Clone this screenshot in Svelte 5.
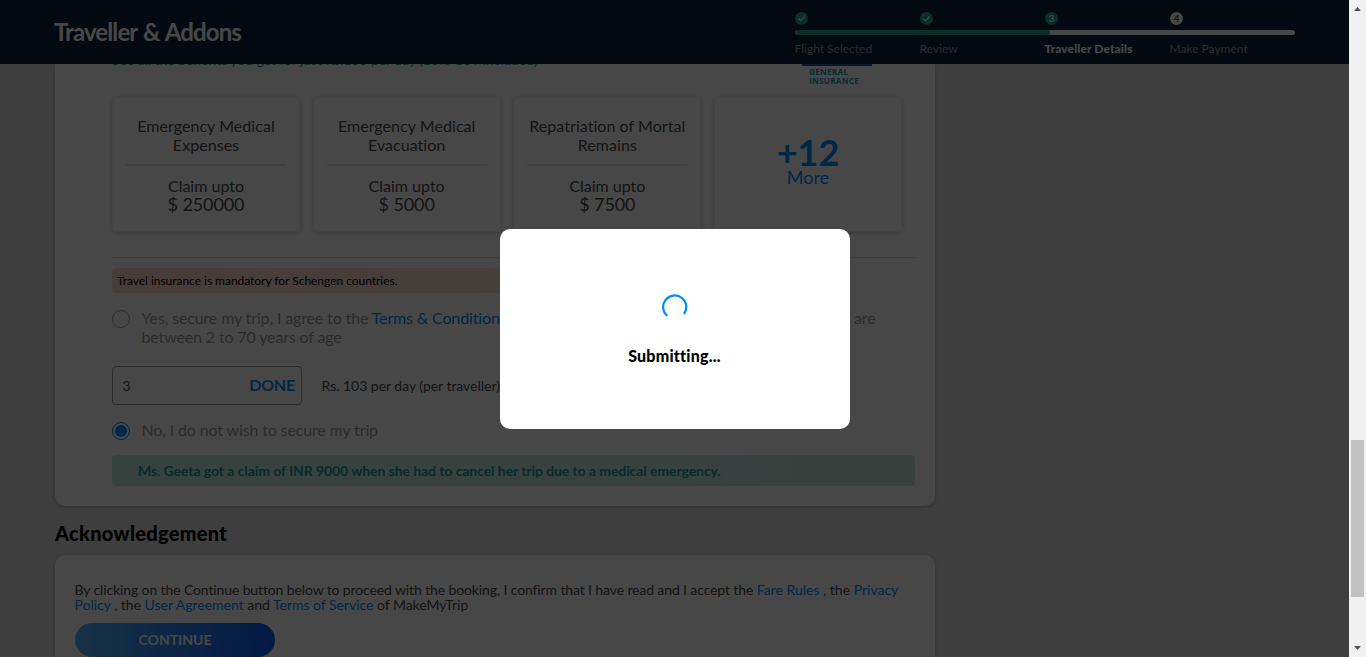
<script>
  const steps = [
    { label: 'Flight Selected', state: 'done' },
    { label: 'Review', state: 'done' },
    { label: 'Traveller Details', state: 'current' },
    { label: 'Make Payment', state: 'next' }
  ];
  const benefits = [
    { lines: ['Emergency Medical', 'Expenses'], amount: '$ 250000' },
    { lines: ['Emergency Medical', 'Evacuation'], amount: '$ 5000' },
    { lines: ['Repatriation of Mortal', 'Remains'], amount: '$ 7500' }
  ];
</script>

<div class="window">
  <div class="page">
    <header>
      <h1>Traveller &amp; Addons</h1>
      <div class="stepper">
        <div class="row">
          {#each steps as step, i}
            <span class="dot {step.state}">
              {#if step.state === 'done'}
                <svg width="13" height="13" viewBox="0 0 13 13"><path d="M3.3 6.7l2.2 2.2 4.2-4.6" fill="none" stroke="#fff" stroke-width="1.2" /></svg>
              {:else}{i + 1}{/if}
            </span>
          {/each}
        </div>
        <div class="track"><div class="fill"></div></div>
        <div class="row labels">
          {#each steps as step}
            <span class={step.state}>{step.label}</span>
          {/each}
        </div>
      </div>
    </header>

    <main>
      <section class="card insurance">
        <div class="intro">
          <p>See all the benefits you get for just Rs.103 per day (18% GST included)</p>
          <div class="logo">GENERAL<br />INSURANCE</div>
        </div>
        <div class="benefits">
          {#each benefits as b}
            <div class="benefit">
              <div class="name">{b.lines[0]}<br />{b.lines[1]}</div>
              <div class="rule"></div>
              <div class="claim">Claim upto</div>
              <div class="amount">{b.amount}</div>
            </div>
          {/each}
          <div class="benefit more">
            <strong>+12</strong>
            <span>More</span>
          </div>
        </div>
        <div class="divider"></div>
        <div class="notice">Travel insurance is mandatory for Schengen countries.</div>
        <div class="option yes">
          <span class="radio"></span>
          <div>
            <div class="first"><span>Yes, secure my trip, I agree to the <a>Terms &amp; Conditions</a> &amp; confirm all passengers</span><span>are</span></div>
            <div>between 2 to 70 years of age</div>
          </div>
        </div>
        <div class="days">
          <div class="field"><span>3</span><b>DONE</b></div>
          <span class="rate">Rs. 103 per day (per traveller)</span>
        </div>
        <div class="option no">
          <span class="radio on"></span>
          <div>No, I do not wish to secure my trip</div>
        </div>
        <div class="story">Ms. Geeta got a claim of INR 9000 when she had to cancel her trip due to a medical emergency.</div>
      </section>

      <h2>Acknowledgement</h2>
      <section class="card ack">
        <p><span class="tight">By clicking on the Continue button below to proceed with the booking, I confirm that I have read and I accept the</span>{' '}<span class="links"><a>Fare Rules</a> , the <a>Privacy</a></span><br /><a>Policy</a> , the <a>User Agreement</a> and <a>Terms of Service</a> of MakeMyTrip</p>
        <button>CONTINUE</button>
      </section>
    </main>

    <div class="overlay">
      <div class="dialog">
        <svg width="26" height="26" viewBox="0 0 26 26"><path d="M5.3 22A11.6 11.6 0 1 1 22 20" fill="none" stroke="#008cff" stroke-width="2.2" /></svg>
        <div>Submitting...</div>
      </div>
    </div>
  </div>

  <div class="scrollbar">
    <svg width="17" height="17" viewBox="0 0 17 17"><path d="M5 11h7L8.500 7z" fill="#505050" /></svg>
    <div class="thumb"></div>
    <svg width="17" height="17" viewBox="0 0 17 17"><path d="M5 6h7L8.500 10z" fill="#505050" /></svg>
  </div>
</div>

<style>
  :global(body) { margin: 0; overflow: hidden; }
  .window { display: flex; width: 1366px; height: 657px; overflow: hidden; font-family: Lato, sans-serif; font-variant-ligatures: none; color: #4a4a4a; }
  .window * { box-sizing: border-box; }
  h1, h2, p { margin: 0; }
  a { color: #008cff; }
  .page { position: relative; width: 1349px; height: 657px; display: flex; flex-direction: column; background: #dfdfdf; overflow: hidden; }

  header { flex: none; height: 64px; padding: 0 54px; display: flex; justify-content: space-between; background: #0a223d; }
  h1 { color: #fff; font-size: 24px; line-height: 63px; font-weight: 700; letter-spacing: -0.9px; word-spacing: 1.2px; }
  .stepper { width: 500px; padding-top: 12px; }
  .row { display: grid; grid-template-columns: repeat(4, 125px); }
  .dot { width: 13px; height: 13px; border-radius: 50%; background: #22a890; color: #fff; font-size: 10px; line-height: 13px; font-weight: 700; text-align: center; }
  .dot svg { display: block; }
  .dot.next { background: #fff; color: #4a4a4a; }
  .track { margin-top: 5px; height: 5px; border-radius: 3px; background: #fff; overflow: hidden; }
  .fill { width: 255px; height: 5px; border-radius: 0 3px 3px 0; background: #22a890; }
  .labels { margin: 6px 0 0 -0.5px; font-size: 12px; line-height: 15px; color: #9b9b9b; white-space: nowrap; }
  .labels .current { color: #fff; font-weight: 900; letter-spacing: 0.1px; }

  main { flex: 1; min-height: 0; padding-left: 55px; overflow: hidden; }
  .card { width: 880px; background: #fff; box-shadow: 0 1px 4px rgba(0, 0, 0, 0.25); }
  .insurance { height: 442px; padding: 0 20px 0 57px; border-radius: 0 0 10px 10px; }
  .intro { height: 33px; display: flex; justify-content: space-between; align-items: flex-start; }
  .intro p { margin-top: -13px; font-size: 14px; line-height: 18px; letter-spacing: -0.07px; color: #1a9b93; white-space: nowrap; }
  .logo { width: 70px; height: 22px; margin-right: 43px; padding: 1px 0 0 7px; border-top: 2px solid #2a4fb0; color: #0f9dbb; font: 700 8.3px/9px "Open Sans", sans-serif; letter-spacing: 0.2px; }
  .benefits { display: grid; grid-template-columns: repeat(4, 188px); column-gap: 12.66px; }
  .benefit { height: 135px; padding: 18px 13px 0; border: 1px solid #eaf0f8; border-radius: 4px; box-shadow: 0 1px 5px rgba(0, 0, 0, 0.2); text-align: center; font-size: 16px; line-height: 19px; white-space: nowrap; }
  .name { margin: 0 -10px; letter-spacing: 0.05px; }
  .rule { height: 2px; margin: 10px 0 10px; background: #dde7f4; }
  .amount { font-size: 18px; line-height: 18px; letter-spacing: -0.1px; }
  .more { display: flex; flex-direction: column; padding-top: 36px; color: #008cff; }
  .more strong { font-size: 36px; line-height: 36px; font-weight: 700; }
  .more span { font-size: 18px; line-height: 14px; }
  .divider { margin-top: 25px; height: 1px; background: #d8d8d8; }
  .notice { width: 560px; margin-top: 10px; height: 25px; padding-left: 5px; border-radius: 4px; background: linear-gradient(90deg, #ffd6c8, #f8e4d4); color: #000; font-size: 12px; line-height: 25px; letter-spacing: -0.03px; }
  .option { display: flex; gap: 11.5px; color: #9b9b9b; font-size: 16px; line-height: 19px; letter-spacing: -0.14px; white-space: nowrap; }
  .yes { margin-top: 15px; }
  .radio { flex: none; width: 18px; height: 18px; margin-top: 2px; border: 1px solid #9b9b9b; border-radius: 50%; }
  .radio.on { padding: 2px; border: 1px solid #008cff; background: #008cff content-box; }
  .first { width: 734px; display: flex; justify-content: space-between; }
  .days { margin-top: 20px; display: flex; align-items: center; gap: 19.5px; }
  .field { width: 190px; height: 39px; padding: 0 6px 0 9.5px; border: 1px solid #9b9b9b; border-radius: 4px; display: flex; align-items: center; justify-content: space-between; font-size: 14px; }
  .field b { margin-top: -2px; color: #008cff; font-size: 16px; font-weight: 700; letter-spacing: -0.2px; }
  .rate { font-size: 14px; letter-spacing: -0.03px; }
  .no { margin-top: 15px; }
  .story { margin-top: 15px; height: 31px; padding-left: 26px; border-radius: 4px; background: linear-gradient(90deg, #c3eddd, #c9e6de); color: #1a9b93; font-size: 14px; line-height: 31px; font-weight: 700; letter-spacing: -0.08px; }
  h2 { margin-top: 15px; color: #000; font-size: 20px; line-height: 24px; font-weight: 900; letter-spacing: 0.28px; }
  .ack { height: 180px; margin-top: 10px; padding: 27px 20px 0 19.5px; border-radius: 10px; font-size: 14px; line-height: 15px; letter-spacing: -0.02px; white-space: nowrap; }
  .tight { letter-spacing: -0.12px; }
  .links { letter-spacing: 0; }
  button { display: block; width: 200px; height: 34px; margin: 11px 0 0 0.5px; padding: 0 0 2px; border: 0; border-radius: 17px; background: linear-gradient(93deg, #53b2fe, #065af3); color: #fff; font: 700 14px Lato, sans-serif; }

  .overlay { position: absolute; inset: 0; display: flex; align-items: center; justify-content: center; background: rgba(0, 0, 0, 0.72); }
  .dialog { width: 350px; height: 200px; border-radius: 10px; background: #fff; display: flex; flex-direction: column; align-items: center; padding-top: 65px; color: #000; font-size: 16px; line-height: 20px; font-weight: 900; }
  .dialog div { margin-top: 26px; letter-spacing: 0.22px; }

  .scrollbar { width: 17px; display: flex; flex-direction: column; background: #f1f1f1; }
  .scrollbar svg { display: block; flex: none; }
  .thumb { width: 13px; height: 157px; margin: 423px 2px 43px; background: #c1c1c1; }
</style>
